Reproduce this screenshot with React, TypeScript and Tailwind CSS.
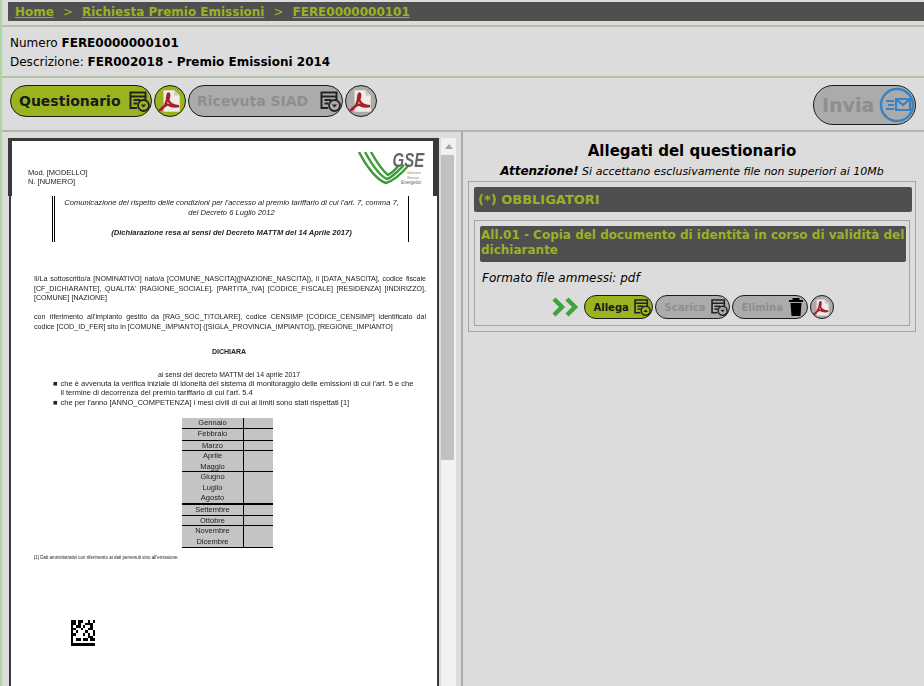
const font = "font-['DejaVu_Sans',Verdana,sans-serif]";

function DocIcon({ size = 22, dark = "#222", up = false }: { size?: number; dark?: string; up?: boolean }) {
  return (
    <svg width={size} height={size} viewBox="0 0 22 22" className="shrink-0">
      <path d="M9 18H2.500V2.500h15V10" fill="none" stroke={dark} strokeWidth="2" />
      <path d="M2.500 6.500h15M5.500 10h7M5.500 13.500h4" fill="none" stroke={dark} strokeWidth="1.800" />
      <circle cx="15.500" cy="15.500" r="5.500" fill="none" stroke={dark} strokeWidth="1.800" />
      <path d={up ? "M12.800 17l2.700-3 2.700 3z" : "M12.800 14.500l2.700 3 2.700-3z"} fill={dark} />
    </svg>
  );
}

function PdfIcon({ size = 26 }: { size?: number }) {
  return (
    <svg width={size} height={size} viewBox="0 0 24 24" className="shrink-0">
      <path d="M6 2h10l5 5v15H6z" fill="#efece6" />
      <path d="M16 2v5h5" fill="#cfcabf" />
      <path
        d="M2 21c3.500-1.500 6-6 7-9.500.6-2.500.3-6.500 1.500-6.500 1.300 0 .7 4-.2 6 1.500 3.500 5 5.500 10 5.700-4 .8-8.300-.2-10.500-1.500-2.300 1-5.300 3.300-7.800 5.800z"
        fill="none"
        stroke="#a81f2c"
        strokeWidth="2.200"
      />
    </svg>
  );
}

function Circle({ size, bg, children }: { size: number; bg: string; children: React.ReactNode }) {
  return (
    <span
      style={{ width: size, height: size, background: bg }}
      className="flex items-center justify-center rounded-full border-[1.5px] border-[#1c1c1c] shrink-0"
    >
      {children}
    </span>
  );
}

function Pill({ label, active, w, small, icon }: { label: string; active?: boolean; w: number; small?: boolean; icon: React.ReactNode }) {
  return (
    <span
      style={{ width: w }}
      className={`flex items-center justify-between rounded-full border-[1.5px] border-[#1c1c1c] font-bold shrink-0 ${
        small ? "h-[24px] pl-[9px] pr-[1px] text-[10px]" : "h-[32px] pl-[8px] pr-[1px] text-[14px]"
      } ${active ? "bg-[#9ab41f] text-[#1a1a1a]" : "bg-[#ababab] text-[#8e8e8e]"}`}
    >
      <span>{label}</span>
      {icon}
    </span>
  );
}

function GseLogo() {
  return (
    <div className="flex items-start h-[36px] mr-[9px] mt-[11px]">
      <svg width="52" height="33" viewBox="0 0 52 33" className="shrink-0">
        <path d="M1 0C7 12 18 28 28 31 36 29 44 21 51 13" fill="none" stroke="#3c9c38" strokeWidth="2.400" />
        <path d="M7 0C13 11 22 24 29 27 35 25 41 18 46 13" fill="none" stroke="#3c9c38" strokeWidth="2.400" />
        <path d="M13 0C18 9 25 19 30 23 34 21 38 17 41 13" fill="none" stroke="#3c9c38" strokeWidth="2.400" />
      </svg>
      <div className="w-[31px] flex flex-col items-end -ml-[17px]">
        <span className="font-['Liberation_Sans',sans-serif] italic font-bold text-[20px] leading-[17px] text-[#666] scale-x-75 origin-right">GSE</span>
        <span className="font-['Liberation_Sans',sans-serif] text-[4px] leading-[5px] text-[#888] mt-[1px] mr-[3px]">Gestore</span>
        <span className="font-['Liberation_Sans',sans-serif] text-[4px] leading-[5px] text-[#888] mr-[5px]">Servizi</span>
        <span className="font-['Liberation_Sans',sans-serif] text-[4.500px] leading-[5px] text-[#666] mr-[3px]">Energetici</span>
      </div>
    </div>
  );
}

const months: [string[], number, string][] = [
  [["Gennaio"], 11, "border-b"],
  [["Febbraio"], 12, "border-b"],
  [["Marzo"], 10, "border-b"],
  [["Aprile", "Maggio"], 21, "border-b"],
  [["Giugno", "Luglio", "Agosto"], 33, "border-b-2"],
  [["Settembre"], 11, "border-b"],
  [["Ottobre"], 10, "border-b"],
  [["Novembre", "Dicembre"], 21, ""],
];

function Barcode() {
  const cells = [
    "1101100101", "1101001110", "1011010010", "1100100110", "1010001001",
    "1100010101", "1000000110", "1011011011", "1000000000", "1111111111",
  ];
  return (
    <div className="flex flex-col w-[24px] h-[26px] ml-[60px]">
      {cells.map((r, i) => (
        <div key={i} className="flex h-[2.600px]">
          {r.split("").map((c, j) => (
            <span key={j} className={`w-[2.400px] h-full ${c === "1" ? "bg-black" : "bg-white"}`} />
          ))}
        </div>
      ))}
    </div>
  );
}

function PdfPage() {
  return (
    <div className="w-[431px] h-[560px] shrink-0 flex flex-col border-t-[3px] border-[#3a3a3a] overflow-hidden font-['Liberation_Sans',sans-serif] text-[#222]">
      <div className="h-[55px] shrink-0 flex justify-between border-l-4 border-r-[6px] border-[#3a3a3a] bg-white">
        <div className="ml-[16px] mt-[27px] text-[7.500px] leading-[9px] blur-[0.35px]">
          <div>Mod. [MODELLO]</div>
          <div>N. [NUMERO]</div>
        </div>
        <GseLogo />
      </div>
      <div className="flex-1 ml-[1px] border-x-2 border-[#3a3a3a] bg-white">
        <div className="blur-[0.35px]">
          <div className="ml-[41px] w-[357px] h-[46px] border-l-[3px] border-double border-r border-black text-center italic text-[7.600px] leading-[10px] pt-[2px]">
            <div>Comunicazione del rispetto delle condizioni per l'accesso al premio tariffario di cui l'art. 7, comma 7,</div>
            <div>del Decreto 6 Luglio 2012</div>
            <div className="mt-[10px] font-semibold">(Dichiarazione resa ai sensi del Decreto MATTM del 14 Aprile 2017)</div>
          </div>
          <div className="ml-[23px] w-[392px] mt-[33px] text-[7.100px] leading-[9.500px] text-justify">
            Il/La sottoscritto/a [NOMINATIVO] nato/a [COMUNE_NASCITA]([NAZIONE_NASCITA]), il [DATA_NASCITA], codice fiscale [CF_DICHIARANTE], QUALITA' [RAGIONE_SOCIALE], [PARTITA_IVA] [CODICE_FISCALE] [RESIDENZA] [INDIRIZZO], [COMUNE] [NAZIONE]
          </div>
          <div className="ml-[23px] w-[392px] mt-[8px] text-[7.100px] leading-[10px] text-justify">
            con riferimento all'impianto gestito da [RAG_SOC_TITOLARE], codice CENSIMP [CODICE_CENSIMP] identificato dal codice [COD_ID_FER] sito in [COMUNE_IMPIANTO] ([SIGLA_PROVINCIA_IMPIANTO]), [REGIONE_IMPIANTO]
          </div>
          <div className="mt-[15px] pl-[10px] text-center font-bold text-[7px] leading-[9px]">DICHIARA</div>
          <div className="mt-[14px] pl-[10px] text-center text-[6.900px] leading-[9px]">ai sensi del decreto MATTM del 14 aprile 2017</div>
          <ul className="ml-[42px] mr-[19px] text-[7.500px] leading-[9.500px]">
            <li className="flex gap-[3px]">
              <span>■</span>
              <span>che è avvenuta la verifica iniziale di idoneità del sistema di monitoraggio delle emissioni di cui l'art. 5 e che il termine di decorrenza del premio tariffario di cui l'art. 5.4</span>
            </li>
            <li className="flex gap-[3px]">
              <span>■</span>
              <span>che per l'anno [ANNO_COMPETENZA] i mesi civili di cui ai limiti sono stati rispettati [1]</span>
            </li>
          </ul>
          <div className="ml-[171px] mt-[11px] w-[91px] border-b border-black bg-[#c4c4c4]">
            {months.map(([names, h, b], i) => (
              <div key={i} style={{ height: h }} className={`flex border-black ${b}`}>
                <div className="w-[62px] border-r border-black text-center text-[7.500px] leading-[10.500px]">
                  {names.map((n) => (
                    <div key={n}>{n}</div>
                  ))}
                </div>
              </div>
            ))}
          </div>
          <div className="ml-[23px] mt-[7px] text-[4.500px] leading-[6px]">[1] Dati amministrativi con riferimento ai dati pervenuti sino all'emissione.</div>
          <div className="mt-[59px]">
            <Barcode />
          </div>
        </div>
      </div>
    </div>
  );
}

export default function App() {
  return (
    <div className={`${font} w-[924px] h-[686px] overflow-hidden bg-[#dcdcdc] text-black flex flex-col border-l-2 border-[#a9d8a0]`}>
      <div className="h-[27px] pt-[2px] pl-[6px] shrink-0 border-b-2 border-[#b4c0a6]">
        <div className="h-[19px] bg-[#4f4f4f] flex items-center pl-[7px] gap-[9px] text-[12px] font-bold text-[#9bb127]">
          <a className="underline">Home</a>
          <span className="font-normal">&gt;</span>
          <a className="underline">Richiesta Premio Emissioni</a>
          <span className="font-normal">&gt;</span>
          <a className="underline">FERE0000000101</a>
        </div>
      </div>
      <div className="h-[51px] pl-[8px] pt-[7px] shrink-0 border-b-2 border-[#b4c0a6] text-[12px] leading-[19px]">
        <div>
          Numero <b>FERE0000000101</b>
        </div>
        <div>
          Descrizione: <b>FER002018 - Premio Emissioni 2014</b>
        </div>
      </div>
      <div className="h-[54px] shrink-0 flex justify-between pl-[8px] pr-[8px] pt-[7px] border-b-2 border-[#b0b8a8]">
        <div className="flex items-start gap-[2px]">
          <Pill label="Questionario" active w={142} icon={<DocIcon size={22} />} />
          <Circle size={32} bg="#9ab41f"><PdfIcon /></Circle>
          <Pill label="Ricevuta SIAD" w={155} icon={<DocIcon size={22} />} />
          <Circle size={32} bg="#ababab"><PdfIcon /></Circle>
        </div>
        <span className="flex items-center justify-between w-[103px] h-[40px] rounded-full border-[1.5px] border-[#1c1c1c] bg-[#ababab] pl-[8px] text-[19px] font-bold text-[#8e8e8e]">
          Invia
          <svg width="36" height="36" viewBox="0 0 36 36" className="shrink-0">
            <circle cx="18" cy="18" r="16" fill="none" stroke="#3784c4" strokeWidth="2.500" />
            <path d="M17 12h14v11H17zM17 12l7 6 7-6" fill="none" stroke="#3784c4" strokeWidth="2.200" />
            <path d="M7 14h8M9 18h6M7 22h8" fill="none" stroke="#3784c4" strokeWidth="2.200" />
          </svg>
        </span>
      </div>
      <div className="flex-1 flex min-h-0">
        <div className="w-[459px] shrink-0 flex pl-[6px] pt-[6px]">
          <PdfPage />
          <div className="ml-[2px] w-[15px] h-[560px] bg-[#f1f1f1]">
            <div className="h-[17px] flex items-center justify-center">
              <span className="w-0 h-0 border-x-[4px] border-x-transparent border-b-[5px] border-b-[#a3a3a3]" />
            </div>
            <div className="w-[13px] h-[305px] bg-[#c1c1c1]" />
          </div>
        </div>
        <div className="flex-1 border-l-2 border-[#a8a8a8] pl-[5px] pr-[8px]">
          <div className="h-[49px] text-center pt-[10px]">
            <div className="text-[15px] font-bold leading-[18px]">Allegati del questionario</div>
            <div className="text-[11px] italic leading-[15px] mt-[4px]">
              <b className="text-[12px]">Attenzione!</b> Si accettano esclusivamente file non superiori ai 10Mb
            </div>
          </div>
          <div className="h-[151px] border border-[#a5a5a5] pl-[5px] pr-[3px] pt-[5px]">
            <div className="h-[25px] bg-[#4f4f4f] rounded-[2px] flex items-center pl-[4px] text-[13px] font-bold text-[#9bb127]">(*) OBBLIGATORI</div>
            <div className="mt-[8px] w-[436px] h-[106px] border border-[#a5a5a5] pl-[5px] pr-[3px] pt-[5px]">
              <div className="bg-[#4f4f4f] rounded-[2px] h-[36px] px-[1px] pt-[2px] text-[12px] leading-[15px] font-bold text-[#9bb127]">
                All.01 - Copia del documento di identità in corso di validità del dichiarante
              </div>
              <div className="mt-[7px] ml-[2px] text-[12px] italic leading-[18px]">Formato file ammessi: pdf</div>
              <div className="mt-[8px] flex items-center justify-center gap-[2px] pr-[2px]">
                <svg width="28" height="20" viewBox="0 0 28 20" className="mr-[3px] shrink-0">
                  <path d="M3 2l8 8-8 8M16 2l8 8-8 8" fill="none" stroke="#3fa33f" strokeWidth="4.500" />
                </svg>
                <Pill label="Allega" active small w={69} icon={<DocIcon size={18} up />} />
                <Pill label="Scarica" small w={75} icon={<DocIcon size={18} />} />
                <Pill label="Elimina" small w={76} icon={
                  <svg width="18" height="20" viewBox="0 0 18 20" className="shrink-0 mr-[1px]">
                    <path d="M2 4h14M6.500 3.500V2h5v1.500" stroke="#000" strokeWidth="2" fill="none" />
                    <path d="M3.500 6h11l-1 13h-9z" fill="#000" />
                  </svg>
                } />
                <Circle size={24} bg="#ababab"><PdfIcon size={19} /></Circle>
              </div>
            </div>
          </div>
        </div>
      </div>
    </div>
  );
}
